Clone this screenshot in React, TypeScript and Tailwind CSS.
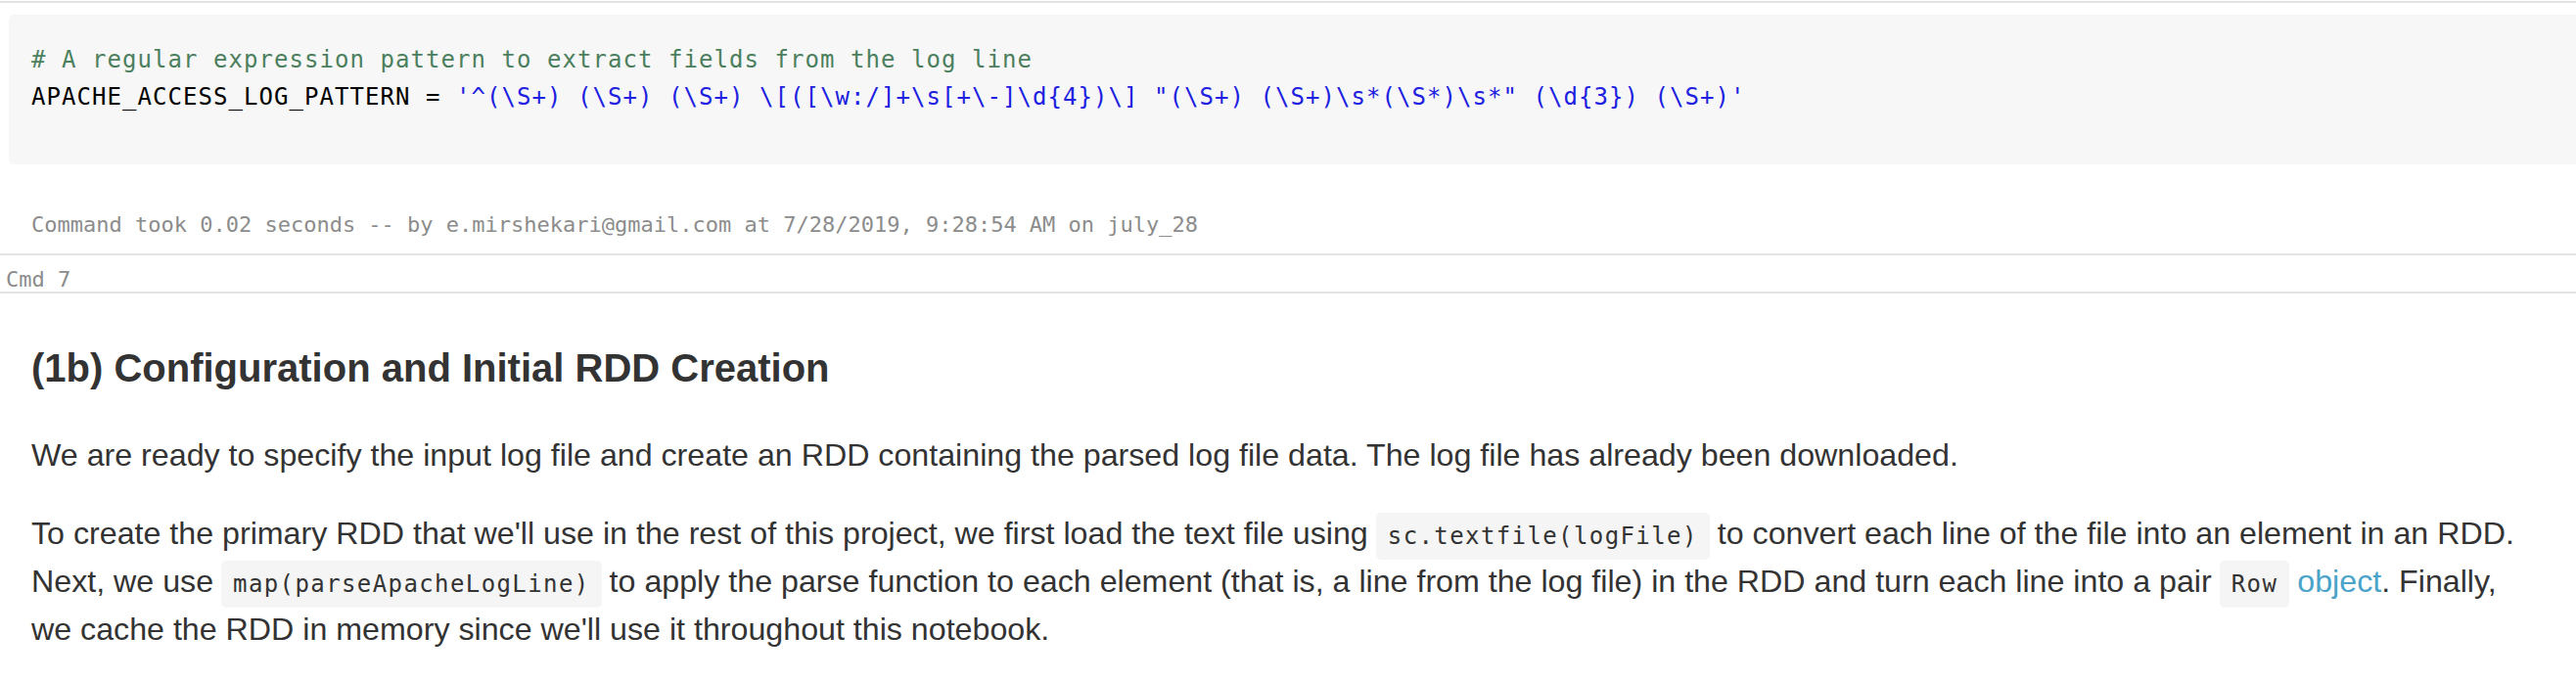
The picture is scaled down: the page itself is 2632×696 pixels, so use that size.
const mono = "font-['DejaVu_Sans_Mono','Liberation_Mono',monospace]";

const InlineCode = ({ children }: { children: string }) => (
  <code
    className={`${mono} mx-[8px] rounded-[5px] bg-[#f5f5f5] px-[12px] py-[10px] text-[24px] leading-[24px] tracking-[1.4px] text-[#333]`}
  >
    {children}
  </code>
);

export default function App() {
  return (
    <div className="min-h-screen w-full overflow-hidden bg-white">
      {/* previous cell separator */}
      <div className="mt-px h-[2px] bg-[#e3e3e3]" />

      {/* code cell */}
      <div className="ml-[9px] mt-[12px] rounded-l-[5px] bg-[#f7f7f7] pl-[23px] pt-[28px] pb-[50px]">
        <pre className={`${mono} text-[24px] leading-[37.5px] tracking-[1.05px] text-black`}>
          <span className="text-[#4b7f5e]"># A regular expression pattern to extract fields from the log line</span>
          {"\n"}
          <span>APACHE_ACCESS_LOG_PATTERN = </span>
          <span className="text-[#2020e0]">
            {`'^(\\S+) (\\S+) (\\S+) \\[([\\w:/]+\\s[+\\-]\\d{4})\\] "(\\S+) (\\S+)\\s*(\\S*)\\s*" (\\d{3}) (\\S+)'`}
          </span>
        </pre>
      </div>

      {/* command result */}
      <div className={`${mono} mt-[47px] pl-[32px] text-[22px] leading-[30px] text-[#8c8c8c]`}>
        Command took 0.02 seconds -- by e.mirshekari@gmail.com at 7/28/2019, 9:28:54 AM on july_28
      </div>

      <div className="mt-[14px] h-[2px] bg-[#e3e3e3]" />
      <div className={`${mono} h-[37px] pl-[6px] pt-[14px] text-[22px] leading-[22px] text-[#8c8c8c]`}>
        Cmd 7
      </div>
      <div className="h-[2px] bg-[#e3e3e3]" />

      {/* markdown cell */}
      <div className="pl-[32px] pr-[8px] pt-[52px] font-['Liberation_Sans',Arial,sans-serif] text-[#333]">
        <h2 className="text-[40px] font-bold leading-[48px]">
          (1b) Configuration and Initial RDD Creation
        </h2>
        <p className="mt-[41px] text-[32.2px] leading-[49px]">
          We are ready to specify the input log file and create an RDD containing the parsed log file data. The log
          file has already been downloaded.
        </p>
        <p className="mt-[31px] whitespace-nowrap text-[32.2px] leading-[49px]">
          To create the primary RDD that we'll use in the rest of this project, we first load the text file using
          <InlineCode>sc.textfile(logFile)</InlineCode>
          to convert each line of the file into an element in an RDD.
          <br />
          Next, we use
          <InlineCode>map(parseApacheLogLine)</InlineCode>
          to apply the parse function to each element (that is, a line from the log file) in the RDD and turn each
          line into a pair
          <InlineCode>Row</InlineCode>
          <a className="text-[#4aa3c8]">object</a>. Finally,
          <br />
          we cache the RDD in memory since we'll use it throughout this notebook.
        </p>
      </div>
    </div>
  );
}
